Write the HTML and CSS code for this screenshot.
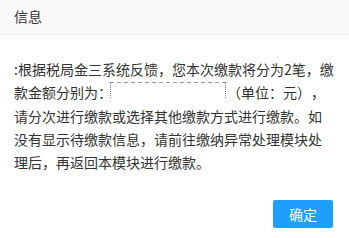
FILE: index.html
```html
<!DOCTYPE html>
<html lang="zh-CN">
<head>
    <meta charset="UTF-8">
    <meta name="viewport" content="width=device-width, initial-scale=1.0">
    <title>信息</title>
    <link rel="stylesheet" href="styles.css">
</head>
<body>
    <div class="layer">
        <div class="layer-title">信息</div>
        <div class="layer-content">
            :根据税局金三系统反馈，您本次缴款将分为2笔，缴<br>
            款金额分别为：<span class="masked"></span>（单位：元），<br>
            请分次进行缴款或选择其他缴款方式进行缴款。如<br>
            没有显示待缴款信息，请前往缴纳异常处理模块处<br>
            理后，再返回本模块进行缴款。
        </div>
        <div class="layer-btns">
            <button type="button" class="btn-ok">确定</button>
        </div>
    </div>
</body>
</html>
```

FILE: styles.css
```css
* {
    margin: 0;
    padding: 0;
    box-sizing: border-box;
}

body {
    font-family: "Noto Sans CJK SC", "Noto Sans", sans-serif;
    background: #fff;
    color: #333;
}

.layer {
    width: 349px;
    height: 238px;
    display: flex;
    flex-direction: column;
}

.layer-title {
    height: 35px;
    line-height: 33px;
    padding: 0 14px;
    font-size: 14px;
    color: #333;
    background: #f8f8f8;
    border-bottom: 1px solid #eee;
}

.layer-content {
    padding: 23px 14px 0;
    font-size: 14px;
    line-height: 23.25px;
    white-space: nowrap;
    text-spacing-trim: space-all;
    font-feature-settings: "chws" 0, "halt" 0, "palt" 0;
}

/* blurred-out amounts */
.masked {
    display: inline-block;
    width: 116px;
    height: 16px;
    margin: 0 1px 0 -2px;
    position: relative;
    background: repeating-linear-gradient(90deg, #999 0 4px, transparent 4px 7px) top left / 100% 1px no-repeat;
}

.masked::before,
.masked::after {
    content: "";
    position: absolute;
    top: 0;
    width: 2px;
    height: 16px;
    border-left: 1px dotted #888;
}

.masked::before {
    left: 0;
}

.masked::after {
    right: 0;
    border-left: none;
    border-right: 1px dotted #888;
}

.layer-btns {
    display: flex;
    justify-content: flex-end;
    padding: 26px 16px 0;
}

.btn-ok {
    width: 60px;
    height: 28px;
    border: none;
    border-radius: 2px;
    background: #1e9fff;
    color: #fff;
    font-family: inherit;
    font-size: 14px;
    cursor: pointer;
}
```
